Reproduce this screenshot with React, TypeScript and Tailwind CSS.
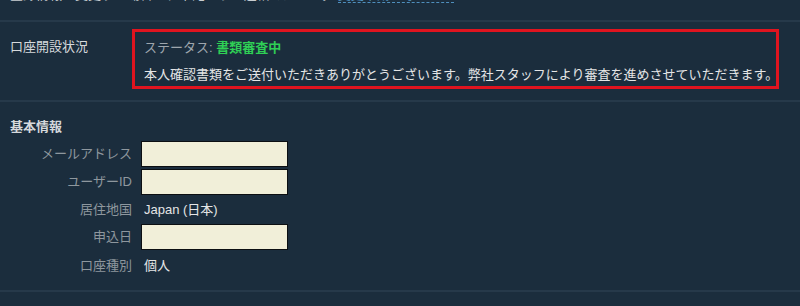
import React from 'react';

const font = "font-['Liberation_Sans','Noto_Sans_CJK_JP',sans-serif]";

const Row: React.FC<{ label: string; children: React.ReactNode; h: string }> = ({ label, children, h }) => (
  <div className={`flex items-center ${h}`}>
    <div className="w-[132px] text-right text-[13px] text-[#8e979e]">{label}</div>
    <div className="ml-[9px] flex items-center">{children}</div>
  </div>
);

const Field: React.FC = () => (
  <input
    type="text"
    className="w-[147px] h-[26px] bg-[#f1efd9] border border-[#0c0f12] outline-none"
  />
);

const App: React.FC = () => {
  return (
    <div className={`w-[800px] h-[306px] bg-[#1b2d3d] overflow-hidden ${font}`}>
      {/* line cut off by the top edge */}
      <div className="h-[20px] overflow-hidden pl-[10px]">
        <p className="-mt-[14px] text-[13px] leading-[18px] text-[#c9cdd1] whitespace-nowrap">
          登録情報を変更する場合は、下記よりご連絡ください。
          <span className="ml-[3px] text-[#4f8fbd] border-b border-dashed border-[#4f8fbd]">変更申請フォームへ</span>
        </p>
      </div>
      <div className="h-[2px] bg-[#26394a]" />

      {/* account status */}
      <div className="flex pt-[7px] pb-[11px]">
        <div className="w-[132px] pl-[10px] pt-[8px] text-[13px] leading-[20px] text-[#d6d9dc]">口座開設状況</div>
        <div className="w-[647px] h-[60px] border-[3px] border-[#e0141f] pl-[9px] pt-[6px]">
          <p className="text-[13px] leading-[20px] text-[#9ea6ad]">
            ステータス: <span className="font-bold text-[#2fcf55]">書類審査中</span>
          </p>
          <p className="mt-[7px] text-[13px] leading-[20px] text-[#e4e5e6] whitespace-nowrap">
            本人確認書類をご送付いただきありがとうございます。弊社スタッフにより審査を進めさせていただきます。
          </p>
        </div>
      </div>
      <div className="h-[2px] bg-[#26394a]" />

      {/* basic info */}
      <div className="pt-[15px] pb-[10px]">
        <h3 className="pl-[10px] text-[13px] leading-[20px] font-bold text-[#d6d9dc]">基本情報</h3>
        <div className="mt-[4px] flex flex-col gap-[2px]">
          <Row label="メールアドレス" h="h-[26px]"><Field /></Row>
          <Row label="ユーザーID" h="h-[26px]"><Field /></Row>
          <Row label="居住地国" h="h-[25px]">
            <span className="pl-[3px] text-[13px] text-[#e4e5e6]">Japan (日本)</span>
          </Row>
          <Row label="申込日" h="h-[26px]"><Field /></Row>
          <Row label="口座種別" h="h-[28px]">
            <span className="pl-[3px] text-[13px] text-[#e4e5e6]">個人</span>
          </Row>
        </div>
      </div>
      <div className="h-[2px] bg-[#26394a]" />
    </div>
  );
};

export default App;
